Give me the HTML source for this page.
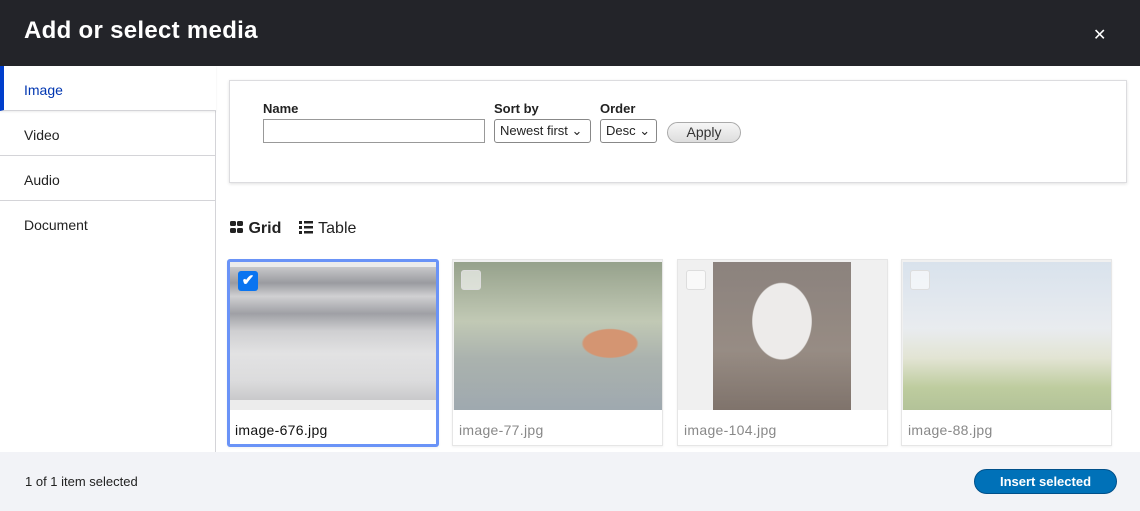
<!DOCTYPE html>
<html><head><style>
*{box-sizing:border-box;margin:0;padding:0}
body{width:1140px;height:511px;overflow:hidden;font-family:"Liberation Sans",sans-serif;background:#fff;position:relative;color:#222}
.hdr{position:absolute;left:0;top:0;width:1140px;height:66px;background:#232429;color:#fff}
.hdr h1{position:absolute;left:24px;top:17px;font-size:24px;font-weight:bold;letter-spacing:0.3px}
.x{position:absolute;left:1093px;top:25px;font-size:16px;color:#fff}
.nav{position:absolute;left:0;top:66px;width:216px;height:386px;border-right:1px solid #d4d4d8}
.tab{position:absolute;left:0;width:215px;height:45px;border-bottom:1px solid #d4d4d8;font-size:14px;padding:16px 0 0 24px;color:#222}
.tab.act{color:#0036b1;background:#fff;width:216px;border-left:4px solid #003ecc;padding-left:20px;box-shadow:0 1px 2px rgba(0,0,0,.08)}
.filt{position:absolute;left:229px;top:80px;width:898px;height:103px;border:1px solid #dcdcdf;box-shadow:0 1px 3px rgba(0,0,0,.12);background:#fff}
.lbl{position:absolute;font-size:13px;font-weight:bold;top:20px}
.inp{position:absolute;top:38px;height:24px;border:1px solid #999;background:#fff;font-size:13px}
.sel{position:absolute;top:38px;height:24px;border:1px solid #888;border-radius:3px;background:#fff;font-size:13px;padding:3px 0 0 5px}
.btn{position:absolute;left:437px;top:41px;width:74px;height:21px;border:1px solid #aaa;border-radius:11px;background:linear-gradient(#f6f6f6,#ddd);font-size:14px;text-align:center;padding-top:1px;color:#333}
.vw{position:absolute;top:220px;font-size:16px}
.card{position:absolute;top:259px;width:211px;height:187px;border:1px solid #e6e6e6;background:#fff;box-shadow:0 1px 2px rgba(0,0,0,.06)}
.card .im{position:absolute;left:1px;top:2px;width:208px;height:148px;opacity:.6}
.card .bar{position:absolute;left:0;top:0;width:209px;height:150px;background:#f0f0f0}
.card .nm{position:absolute;left:6px;top:162px;font-size:14px;color:#888;letter-spacing:0.3px}
.card .cb{position:absolute;left:8px;top:10px;width:20px;height:20px;border-radius:3px;background:rgba(255,255,255,.6);border:1px solid #ddd}
.foot{position:absolute;left:0;top:452px;width:1140px;height:59px;background:#f2f3f7}
.foot .t{position:absolute;left:25px;top:22px;font-size:13px}
.ins{position:absolute;left:974px;top:17px;width:143px;height:25px;border-radius:13px;background:#0071b8;border:1px solid #00508a;color:#fff;font-weight:bold;font-size:13px;text-align:center;padding-top:4px}
</style></head><body>
<div class="hdr"><h1>Add or select media</h1><div class="x">✕</div></div>
<div class="nav">
<div class="tab act" style="top:0">Image</div>
<div class="tab" style="top:45px">Video</div>
<div class="tab" style="top:90px">Audio</div>
<div class="tab" style="top:135px;border-bottom:none">Document</div>
</div>
<div class="filt">
<div class="lbl" style="left:33px">Name</div><div class="inp" style="left:33px;width:222px"></div>
<div class="lbl" style="left:264px">Sort by</div><div class="sel" style="left:264px;width:97px">Newest first ⌄</div>
<div class="lbl" style="left:370px">Order</div><div class="sel" style="left:370px;width:57px">Desc ⌄</div>
<div class="btn">Apply</div>
</div>
<div class="vw" style="left:229px;font-weight:bold"><svg width="15" height="14" style="vertical-align:-1px"><rect x="1" y="1" width="6" height="5" rx="1.5" fill="#222"/><rect x="8" y="1" width="6" height="5" rx="1.5" fill="#222"/><rect x="1" y="8" width="6" height="5" rx="1.5" fill="#222"/><rect x="8" y="8" width="6" height="5" rx="1.5" fill="#222"/></svg> Grid</div>
<div class="vw" style="left:298px"><svg width="16" height="14" style="vertical-align:-1px"><g fill="#222"><rect x="1" y="1" width="3" height="3"/><rect x="1" y="6" width="3" height="3"/><rect x="1" y="11" width="3" height="3"/><rect x="6" y="1" width="9" height="2.5"/><rect x="6" y="6" width="9" height="2.5"/><rect x="6" y="11" width="9" height="2.5"/></g></svg> Table</div>
<div class="card" style="left:227px;border:3px solid #6a93f7;width:212px;height:188px;border-radius:3px">
<div class="bar" style="width:206px;height:148px;background:#ececec"></div>
<div style="position:absolute;left:0;top:5px;width:206px;height:133px;background:linear-gradient(180deg,#c8c8ca 0%,#9a9ba0 12%,#d0d0d2 22%,#9fa0a5 35%,#cfcfd1 48%,#e2e2e3 65%,#dcdcdd 85%,#c9c9cb 100%)"></div>
<div style="position:absolute;left:8px;top:9px;width:20px;height:20px;border-radius:3px;background:#0a74f0;color:#fff;font-size:15px;font-weight:bold;text-align:center;line-height:20px">✔</div>
<div class="nm" style="color:#111;left:5px;top:160px">image-676.jpg</div></div>
<div class="card" style="left:452px"><div class="bar"></div><div class="im" style="background:radial-gradient(ellipse at 75% 55%,#c25a20 0 12%,transparent 13%),linear-gradient(180deg,#5b6e4a 0%,#a3b08e 40%,#7d8a83 65%,#6a7a84 100%)"></div><div class="cb"></div><div class="nm">image-77.jpg</div></div>
<div class="card" style="left:677px"><div class="bar"></div><div class="im" style="left:35px;width:138px;opacity:.75;background:radial-gradient(ellipse at 50% 40%,#eceae8 0 30%,transparent 31%),linear-gradient(180deg,#6a5e58 0%,#7a6b60 60%,#5a4a40 100%)"></div><div class="cb"></div><div class="nm">image-104.jpg</div></div>
<div class="card" style="left:901px"><div class="bar"></div><div class="im" style="background:linear-gradient(180deg,#c9d9ea 0%,#e4e9ef 45%,#d9dcc0 65%,#9cb468 85%,#8aa45e 100%)"></div><div class="cb"></div><div class="nm">image-88.jpg</div></div>
<div class="foot"><div class="t">1 of 1 item selected</div><div class="ins">Insert selected</div></div>
</body></html>
